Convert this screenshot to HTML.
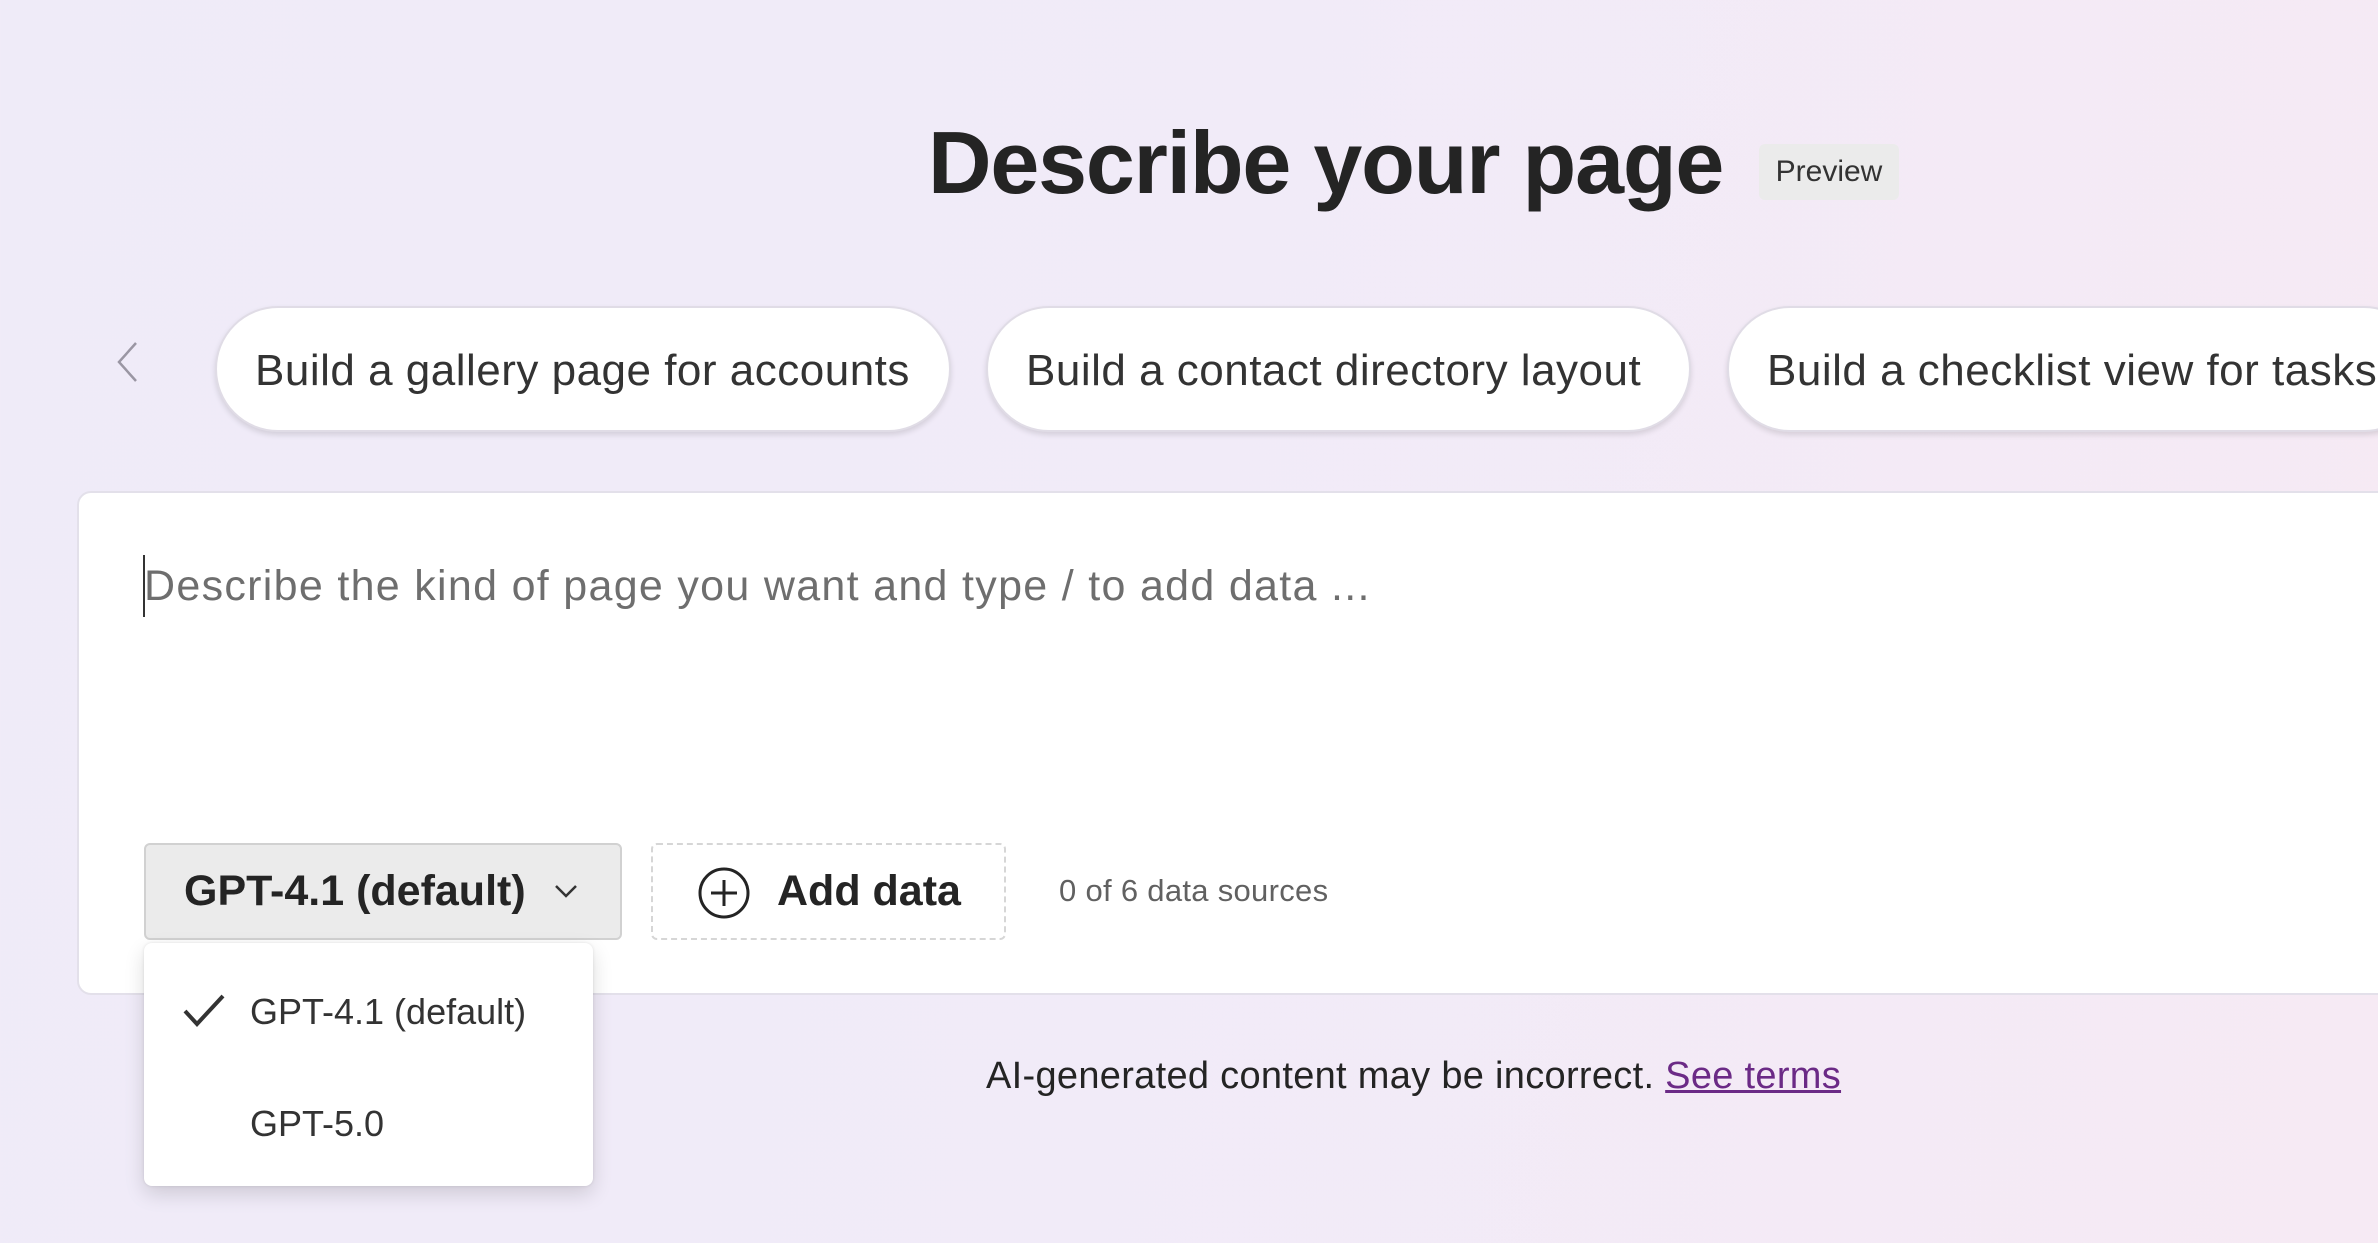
<!DOCTYPE html>
<html><head><meta charset="utf-8">
<style>
html,body{margin:0;padding:0;}
body{width:2378px;height:1243px;overflow:hidden;position:relative;
background:linear-gradient(100deg,#efebf8 0%,#f1ebf8 50%,#f6eaf4 100%);
font-family:"Liberation Sans",sans-serif;color:#242424;}
.abs{position:absolute;white-space:nowrap;}
.title{left:928px;top:112px;font-size:88px;font-weight:bold;letter-spacing:-1.2px;color:#242424;}
.badge{left:1759px;top:144px;width:140px;height:56px;background:#ebebeb;border-radius:6px;font-size:30px;line-height:56px;text-align:center;color:#333;}
.pill{top:306px;height:126px;background:#fff;border:2px solid #e0dce6;border-radius:64px;box-shadow:0 3px 6px rgba(0,0,0,.12);font-size:44px;letter-spacing:0.5px;line-height:126px;color:#333;box-sizing:border-box;padding-left:38px;overflow:hidden;}
.card{left:77px;top:491px;width:2400px;height:504px;background:#fff;border:2px solid #e3e0ea;border-radius:14px;box-sizing:border-box;}
.ph{left:144px;top:562px;font-size:43px;letter-spacing:1.3px;color:#6e6e6e;}
.caret{left:143px;top:555px;width:2px;height:62px;background:#333;}
.gpt{left:144px;top:843px;width:478px;height:97px;background:#ebebeb;border:2px solid #d1d1d1;border-radius:6px;box-sizing:border-box;font-size:43px;font-weight:bold;line-height:93px;padding-left:38px;}
.add{left:651px;top:843px;width:355px;height:97px;border:2px dashed #d6d6d6;border-radius:6px;box-sizing:border-box;}
.cnt{left:1059px;top:873px;font-size:31px;letter-spacing:0.3px;color:#616161;}
.dd{left:144px;top:943px;width:449px;height:243px;background:#fff;border-radius:8px;box-shadow:0 8px 20px rgba(0,0,0,.14),0 0 3px rgba(0,0,0,.1);}
.it{font-size:36px;color:#333;}
.foot{left:986px;top:1055px;font-size:38px;letter-spacing:0.3px;color:#242424;}
.foot a{color:#6b2a86;text-decoration:underline;}
</style></head><body>
<div class="abs title">Describe your page</div>
<div class="abs badge">Preview</div>
<svg class="abs" style="left:114px;top:340px" width="26" height="44" viewBox="0 0 26 44"><path d="M22 3 L5 22 L22 41" fill="none" stroke="#9a96a3" stroke-width="2.5"/></svg>
<div class="abs pill" style="left:215px;width:736px;">Build a gallery page for accounts</div>
<div class="abs pill" style="left:986px;width:705px;">Build a contact directory layout</div>
<div class="abs pill" style="left:1727px;width:700px;">Build a checklist view for tasks</div>
<div class="abs card"></div>
<div class="abs caret"></div>
<div class="abs ph">Describe the kind of page you want and type / to add data ...</div>
<div class="abs gpt">GPT-4.1 (default)<svg style="position:absolute;left:408px;top:38px" width="24" height="16" viewBox="0 0 24 16"><path d="M2 3 L12 13 L22 3" fill="none" stroke="#333" stroke-width="2.5"/></svg></div>
<div class="abs add">
<svg style="position:absolute;left:44px;top:21px" width="54" height="54" viewBox="0 0 54 54"><circle cx="27" cy="27" r="24" fill="none" stroke="#242424" stroke-width="3"/><path d="M27 14V40M14 27H40" stroke="#242424" stroke-width="3"/></svg>
<div style="position:absolute;left:124px;top:0;line-height:93px;font-size:43px;font-weight:bold;">Add data</div>
</div>
<div class="abs cnt">0 of 6 data sources</div>
<div class="abs dd">
<svg style="position:absolute;left:38px;top:50px" width="44" height="36" viewBox="0 0 44 36"><path d="M3 18 L15 31 L41 3" fill="none" stroke="#333" stroke-width="4"/></svg>
<div class="abs it" style="left:106px;top:48px;">GPT-4.1 (default)</div>
<div class="abs it" style="left:106px;top:160px;">GPT-5.0</div>
</div>
<div class="abs foot">AI-generated content may be incorrect. <a>See terms</a></div>
</body></html>
